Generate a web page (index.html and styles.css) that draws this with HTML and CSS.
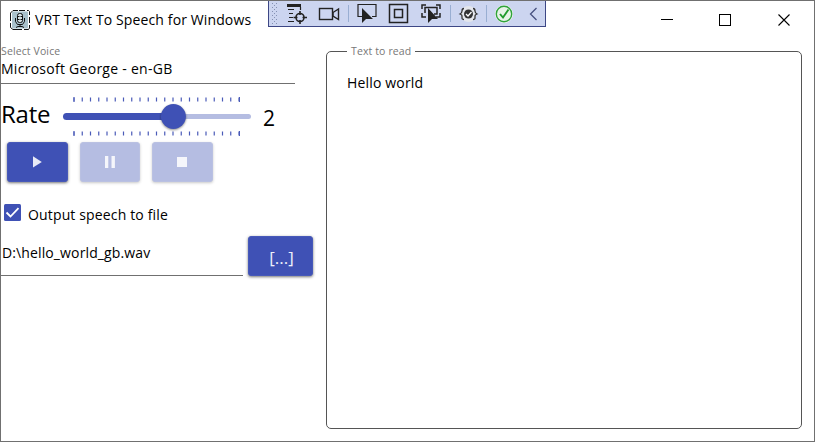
FILE: index.html
```html
<!DOCTYPE html>
<html lang="en">
<head>
<meta charset="utf-8">
<title>VRT Text To Speech for Windows</title>
<link rel="stylesheet" href="styles.css">
</head>
<body>
<div class="window">
  <header class="titlebar">
    <svg class="app-icon" width="20" height="20" viewBox="0 0 20 20">
      <rect x=".5" y=".5" width="19" height="19" rx="2.500" fill="#fff"/>
      <path d="M3 .5h5M9 .5h6M17 .5h1.500l1 1V5M19.500 7v6M19.500 15v3l-1 1.500H14M12 19.500H3l-2.500-2V13M.5 11V3L3 .5" fill="none" stroke="#111"/>
      <rect x="2" y="1.500" width="16" height="17" rx="1" fill="#a9c1cb"/>
      <rect x="7.500" y="3.500" width="5" height="9" rx="2" fill="#d5e0e4" stroke="#111"/>
      <path d="M8 6.500h1.500M10.500 6.500H12M8 9.500h1.500M10.500 9.500H12M5.500 8v3.500l2 3h5l2-3V8M10 14v2.500M6 17.500l2-1h4l2 1" fill="none" stroke="#111"/>
    </svg>
    <h1 class="title">VRT Text To Speech for Windows</h1>
    <svg class="caption" width="132" height="14" viewBox="0 0 132 14">
      <path d="M1 6.500h12" stroke="#000"/>
      <rect x="59.500" y="1.500" width="11" height="11" fill="none" stroke="#000"/>
      <path d="M118.500 1.500l11 11M129.500 1.500l-11 11" stroke="#000" stroke-width="1.100"/>
    </svg>
  </header>

  <svg class="debug-bar" width="278" height="27" viewBox="0 0 278 27">
    <rect x=".5" y=".5" width="277" height="26" fill="#ccd5f0" stroke="#3d4785"/>
    <g stroke="#8490b3" stroke-dasharray="1 3">
      <path d="M4.500 3v21M8.500 3v21"/><path d="M6.500 5v18"/>
    </g>
    <g fill="none" stroke="#222" stroke-width="1.200">
      <path d="M19 5.500h14" stroke-width="3"/>
      <path d="M20 9.500h6M21 13.500h4M21 17.500h4M20 21.500h6M32.500 7v3"/>
      <circle cx="32" cy="17.500" r="4" stroke-width="1.600"/><path d="M32 11v4M32 20v4M25.500 17.500h4M34.500 17.500H39" stroke-width="1.600"/>
      <rect x="51.500" y="8.500" width="13" height="11" stroke-width="1.400"/><path d="M65 12.500l5.500-3.500v10.500l-5.500-3.500z" stroke-width="1.400"/>
      <path d="M94 16.500h-4v-12h18v12h-4"/>
      <rect x="121.500" y="4.500" width="18" height="18" stroke-width="1.500"/><rect x="126.500" y="9.500" width="8" height="8" stroke-width="1.500"/>
      <path d="M154 9V5h4M168 5h4v4M154 13v4h4M168 17h4v-4M157 13V7.500h12V14h-3" stroke-width="1.500"/>
    </g>
    <path d="M94 8v15l4-4h7z" fill="#222"/>
    <path d="M160 8v15l4-4h6z" fill="#222"/>
    <path d="M80.500 5v17M182.500 5v17M218.500 5v17" stroke="#99aed2"/>
    <circle cx="200.500" cy="14" r="8" fill="#e4e6eb"/>
    <circle cx="200.500" cy="14" r="4.500" fill="#333"/>
    <path d="M198 14l2 2 3.500-4" fill="none" stroke="#fff" stroke-width="1.300"/>
    <path d="M196 8.500c-2 0-2 1-2 2.500s0 2-2 3c2 1 2 1 2 3s0 2.500 2 2.500M205 8.500c2 0 2 1 2 2.500s0 2 2 3c-2 1-2 1-2 3s0 2.500-2 2.500" fill="none" stroke="#333" stroke-width="1.300"/>
    <circle cx="236" cy="14" r="9" fill="#f3f7f3"/>
    <circle cx="236" cy="14" r="7.700" fill="#e6f3e6" stroke="#2fa33a" stroke-width="1.400"/>
    <path d="M232 14l3 3.500 5.500-8" fill="none" stroke="#219b2c" stroke-width="1.900"/>
    <path d="M268.500 8l-6 6 6 6" fill="none" stroke="#47507f" stroke-width="1.300"/>
  </svg>

  <main class="content">
    <section class="controls">
      <div class="voice">
        <div class="voice-label"><span>Select Voice</span></div>
        <div class="voice-value"><span>Microsoft George - en-GB</span></div>
      </div>

      <div class="rate">
        <span class="rate-label">Rate</span>
        <svg class="slider" width="194" height="46" viewBox="0 0 194 46">
          <g stroke="#4a5bb8" stroke-width="4" stroke-dasharray="1.200 7.050">
            <path d="M13.400 6.500H180"/><path d="M13.400 40.500H180"/>
          </g>
          <path d="M14 4v5M14 38v5M179.500 4v5M179.500 38v5" stroke="#4a5bb8"/>
          <path d="M113 23.500h75.500" stroke="#b5bde2" stroke-width="5" stroke-linecap="round"/>
          <path d="M6.500 23.500H113" stroke="#3f51b5" stroke-width="7" stroke-linecap="round"/>
          <circle class="thumb" cx="113.400" cy="23.500" r="12.500" fill="#3f51b5"/>
        </svg>
        <span class="rate-value">2</span>
      </div>

      <div class="playback">
        <button class="btn"><svg width="12" height="12" viewBox="0 0 12 12"><path d="M2 .3v11.200l8.800-5.600z" fill="#e8eaf6"/></svg></button>
        <button class="btn off"><svg width="12" height="12" viewBox="0 0 12 12"><path d="M1 0h3.300v12H1zM7.500 0h3.400v12H7.500z" fill="#f5f6fb"/></svg></button>
        <button class="btn off"><svg width="12" height="12" viewBox="0 0 12 12"><path d="M1 1h10v10H1z" fill="#f5f6fb"/></svg></button>
      </div>

      <div class="output">
        <svg width="17" height="17" viewBox="0 0 17 17"><rect width="17" height="17" rx="1.500" fill="#3f51b5"/><path d="M2.500 8.500l4 4 8-8.300" fill="none" stroke="#fff" stroke-width="1.800"/></svg>
        <span class="output-label">Output speech to file</span>
      </div>

      <div class="file">
        <div class="path"><span>D:\hello_world_gb.wav</span></div>
        <button class="btn browse"><span>[...]</span></button>
      </div>
    </section>

    <fieldset class="reader">
      <legend>Text to read</legend>
      <div class="reader-text"><span>Hello world</span></div>
    </fieldset>
  </main>
</div>
</body>
</html>
```
FILE: styles.css
```css
* { box-sizing: border-box; }
body {
  margin: 0;
  font-family: "Open Sans", "Noto Sans", sans-serif;
  font-size: 14px;
  letter-spacing: 0.12px;
  color: #000;
}
.window {
  position: relative;
  width: 815px;
  height: 442px;
  overflow: hidden;
  border: 1px solid #707070;
  background: #fff;
}
.titlebar {
  display: flex;
  align-items: center;
  height: 37px;
  padding: 0 22px 0 9px;
}
.title {
  margin: 0 0 0 5px;
  font-size: 14px;
  font-weight: 400;
  white-space: nowrap;
}
.caption { margin-left: auto; }
.debug-bar { position: absolute; left: 267px; top: -1px; }
.content { display: flex; }
.controls { width: 325px; height: 403px; }
.voice {
  width: 294px;
  height: 46px;
  padding-top: 6px;
  border-bottom: 1px solid #707070;
}
.voice-label { height: 14px; line-height: 14px; font-size: 10.500px; color: #777; }
.voice-value { height: 24px; line-height: 22px; letter-spacing: 0.27px; }
.rate { display: flex; height: 56px; padding-top: 9px; }
.rate-label { width: 59px; line-height: 42px; font-size: 24px; letter-spacing: -0.2px; white-space: nowrap; }
.slider { flex: none; }
.thumb { filter: drop-shadow(0 1px 1px rgba(0, 0, 0, .45)); }
.rate-value { margin-left: 9px; line-height: 50px; font-size: 21px; }
.playback { display: flex; gap: 12px; padding: 2px 0 0 6px; }
.btn {
  display: flex;
  align-items: center;
  justify-content: center;
  width: 60.500px;
  height: 40px;
  padding: 0;
  border: 1px solid #4759b9;
  border-radius: 3px;
  background: #3f51b5;
  box-shadow: 0 1px 3px rgba(0, 0, 0, .55);
  font-family: inherit;
}
.btn.off {
  border-color: #bac1e2;
  background: #b5bde2;
  box-shadow: 0 1px 3px rgba(0, 0, 0, .22);
}
.output { display: flex; align-items: center; height: 20px; margin-top: 20px; padding-left: 3px; }
.output-label { margin: 4px 0 0 7px; letter-spacing: 0.15px; }
.file { display: flex; align-items: flex-start; gap: 5px; margin-top: 14px; }
.path {
  width: 242px;
  height: 40px;
  padding-left: 1px;
  line-height: 34px;
  border-bottom: 1px solid #707070;
}
.btn.browse { width: 65px; padding: 2px 0 0 2px; color: #f0f1fa; font-size: 17px; }
.reader {
  width: 476px;
  height: 386px;
  min-width: 0;
  margin: 5px 0 0;
  padding: 0 20px;
  border: 1px solid #555;
  border-radius: 5px;
}
legend { padding: 0 4px; line-height: 16px; font-size: 10.500px; color: #777; }
.reader-text { margin-top: 14px; line-height: 20px; letter-spacing: 0.17px; }
```
